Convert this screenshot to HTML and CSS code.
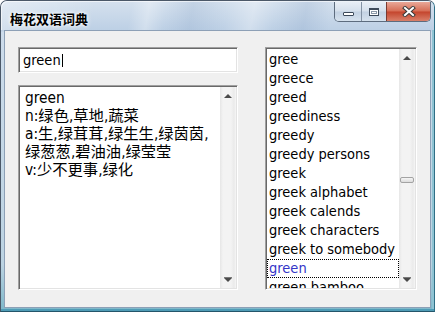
FILE: index.html
```html
<!DOCTYPE html>
<html lang="zh-cn">
<head>
  <meta charset="UTF-8">
  <meta name="viewport" content="width=device-width, initial-scale=1.0">
  <title>梅花双语词典</title>
  <link rel="stylesheet" href="styles.css">
</head>
<body>
  <div class="window">
    <div class="titlebar">
      <span class="title">梅花双语词典</span>
      <div class="caption-buttons">
        <div class="cap-btn btn-min"><span class="glyph-min"></span></div>
        <div class="cap-btn btn-max"><span class="glyph-max"></span></div>
        <div class="cap-btn btn-close">
          <svg width="14" height="11" viewBox="0 0 14 11">
            <path d="M3 2 L11 9 M11 2 L3 9" stroke="#3b3b3b" stroke-width="4" stroke-linecap="square" fill="none"/>
            <path d="M3 2 L11 9 M11 2 L3 9" stroke="#ffffff" stroke-width="2" stroke-linecap="square" fill="none"/>
          </svg>
        </div>
      </div>
    </div>

    <div class="client">
      <div class="field search">
        <span>green</span><span class="caret"></span>
      </div>

      <div class="field meaning">
        <div class="meaning-text">
          <div>green</div>
          <div>n:绿色,草地,蔬菜</div>
          <div>a:生,绿茸茸,绿生生,绿茵茵,</div>
          <div>绿葱葱,碧油油,绿莹莹</div>
          <div>v:少不更事,绿化</div>
        </div>
        <div class="scrollbar">
          <div class="arrow"><span class="tri-up"></span></div>
          <div class="track"></div>
          <div class="arrow"><span class="tri-down"></span></div>
        </div>
      </div>

      <div class="field wordlist">
        <ul class="words">
          <li>gree</li>
          <li>greece</li>
          <li>greed</li>
          <li>greediness</li>
          <li>greedy</li>
          <li>greedy persons</li>
          <li>greek</li>
          <li>greek alphabet</li>
          <li>greek calends</li>
          <li>greek characters</li>
          <li>greek to somebody</li>
          <li class="current">green</li>
          <li>green bamboo</li>
        </ul>
        <div class="scrollbar">
          <div class="arrow"><span class="tri-up"></span></div>
          <div class="track list-track"><div class="thumb"></div></div>
          <div class="arrow"><span class="tri-down"></span></div>
        </div>
      </div>
    </div>
  </div>
</body>
</html>
```

FILE: styles.css
```css
* {
  box-sizing: border-box;
}
body {
  margin: 0;
  background-color: white;
  font-family: "DejaVu Sans Condensed", "Liberation Sans", "Noto Sans CJK SC", sans-serif;
}
.window {
  width: 435px;
  height: 312px;
  border: 1px solid #4b5868;
  border-right-color: #2f6f86;
  border-bottom-color: #24566a;
  border-radius: 7px 7px 0 0;
  padding: 0 3px 3px 3px;
  display: flex;
  flex-direction: column;
  background: linear-gradient(to bottom, #cfdcec 0, #bfd1e5 30px, #cddceb 31px, #bcd3e2 85%, #7db7c9 100%);
  box-shadow: inset 0 -2px 0 #4f9cb6, inset -2px 0 0 #8fc3d3;
}
.titlebar {
  height: 29px;
  flex-shrink: 0;
  display: flex;
  justify-content: space-between;
  align-items: flex-start;
  padding: 0 3px 0 9px;
  margin: 0 -3px;
  border-radius: 6px 6px 0 0;
  background:
    linear-gradient(100deg, rgba(255,255,255,0.35) 0, rgba(255,255,255,0) 22%,
      rgba(255,255,255,0) 30%, rgba(255,255,255,0.3) 34%, rgba(255,255,255,0) 38%,
      rgba(120,150,190,0.18) 44%, rgba(255,255,255,0) 52%,
      rgba(255,255,255,0.3) 58%, rgba(255,255,255,0) 63%,
      rgba(120,150,190,0.2) 70%, rgba(255,255,255,0) 76%),
    linear-gradient(to bottom, #d5e1ee, #bdd0e5);
  box-shadow: inset 1px 1px 0 rgba(255,255,255,0.6);
}
.title {
  font-family: "Noto Sans CJK SC", sans-serif;
  font-weight: bold;
  font-size: 13px;
  line-height: 14px;
  margin-top: 11px;
  color: #000;
  text-shadow: 0 0 5px #fff, 0 0 3px #fff;
}
.caption-buttons {
  display: flex;
  margin-top: 1px;
  border: 1px solid #5d6c7e;
  border-top: none;
  border-radius: 0 0 5px 5px;
  overflow: hidden;
}
.cap-btn {
  height: 19px;
  display: flex;
  align-items: center;
  justify-content: center;
}
.btn-min, .btn-max {
  width: 27px;
  border-right: 1px solid #8392a4;
  background: linear-gradient(to bottom, #e8eef6, #d5e0ec 48%, #c2d1e2 52%, #d6e2ee);
}
.btn-max {
  width: 25px;
  border-right-color: #7a3a30;
}
.btn-close {
  width: 43px;
  background: linear-gradient(to bottom, #e9a898, #d66d55 48%, #c4452d 52%, #d9806a);
}
.glyph-min {
  width: 11px;
  height: 4px;
  margin-top: 5px;
  border: 1px solid #3d4a5a;
  border-radius: 1px;
  background: #fff;
}
.glyph-max {
  width: 10px;
  height: 8px;
  border: 1px solid #3d4a5a;
  border-top-width: 2px;
  background: #fff;
  box-shadow: inset 0 0 0 1px #fff, inset 0 0 0 2px #8b98a8;
}
.client {
  flex: 1;
  min-height: 0;
  background-color: #f0f0f0;
  border: 1px solid #8da0b6;
  display: grid;
  grid-template-columns: 220px 152px;
  grid-template-rows: 26px minmax(0, 1fr);
  column-gap: 27px;
  row-gap: 12px;
  padding: 16px 13px 17px 13px;
}
.field {
  background-color: #fff;
  border: 1px solid;
  border-color: #a0a0a0 #fff #fff #a0a0a0;
  box-shadow: inset 1px 1px 0 #696969, inset -1px -1px 0 #e3e3e3;
  font-size: 14.5px;
  color: #000;
  min-height: 0;
}
.search {
  display: flex;
  align-items: center;
  padding: 0 3px 0 4px;
}
.caret {
  width: 1px;
  height: 13px;
  margin-left: 1px;
  background-color: #000;
}
.meaning {
  display: flex;
  padding: 1px;
  font-size: 15.3px;
}
.meaning-text {
  flex: 1;
  padding: 2px 0 0 5px;
  line-height: 18px;
  white-space: nowrap;
  overflow: hidden;
}
.scrollbar {
  width: 16px;
  display: flex;
  flex-direction: column;
  background: linear-gradient(to right, #e6e6e6 0, #f3f3f3 3px, #f3f3f3 11px, #eaeaea 14px, #f6f6f6 16px);
}
.arrow {
  height: 17px;
  flex-shrink: 0;
  display: flex;
  align-items: center;
  justify-content: center;
}
.tri-up, .tri-down {
  width: 0;
  height: 0;
  border-left: 4px solid transparent;
  border-right: 4px solid transparent;
}
.tri-up {
  border-bottom: 4px solid #4a4a4a;
}
.tri-down {
  border-top: 4px solid #4a4a4a;
  box-shadow: 0 -1px 0 #7a7a7a;
}
.track {
  flex: 1;
  min-height: 0;
}
.list-track {
  padding-top: 111px;
}
.thumb {
  height: 6px;
  margin: 0 1px;
  border: 1px solid #a3a3a3;
  border-radius: 2px;
  background: linear-gradient(to bottom, #f6f6f6, #dcdcdc);
}
.wordlist {
  grid-row: 1 / 3;
  grid-column: 2;
  display: flex;
  padding: 1px;
  overflow: hidden;
}
.words {
  flex: 1;
  list-style: none;
  margin: 0;
  padding: 1px 0 0 0;
  overflow: hidden;
}
.words li {
  height: 19px;
  line-height: 19px;
  padding-left: 2px;
  white-space: nowrap;
}
.words li.current {
  color: #3535c8;
  outline: 1px dotted #000;
  outline-offset: -1px;
}
```
